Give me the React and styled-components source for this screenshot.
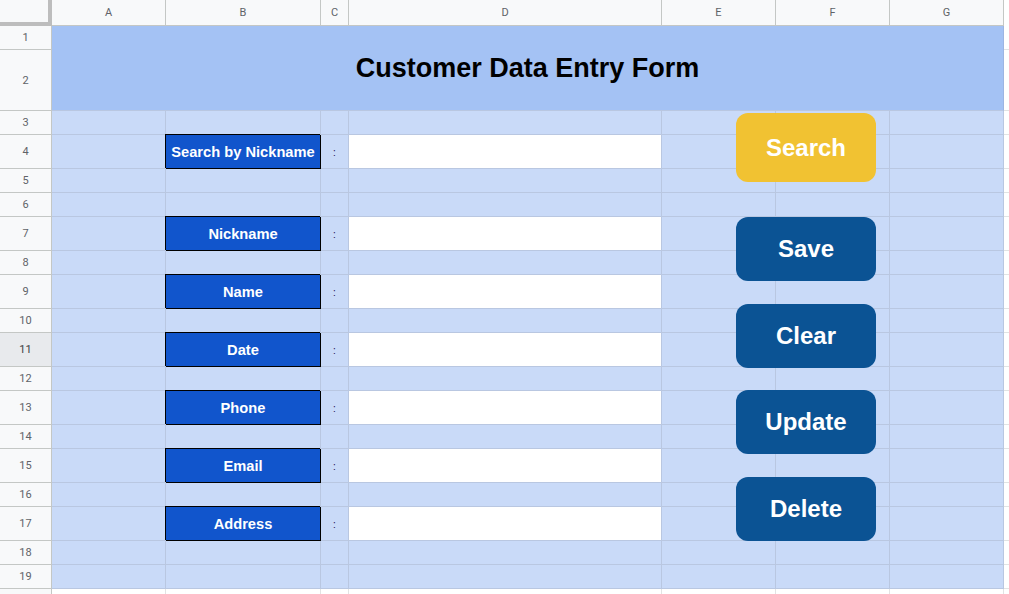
import React from 'react';
import styled, { createGlobalStyle } from 'styled-components';

const Global = createGlobalStyle`
  html, body { margin: 0; padding: 0; background: #ffffff; overflow: hidden; }
  body { font-family: "Liberation Sans", Arial, sans-serif; }
  * { box-sizing: border-box; }
`;

const COLS = ['A', 'B', 'C', 'D', 'E', 'F', 'G'];

const ROWS = [
  { n: 1, h: 24, kind: 'title' },
  { n: 2, h: 61, kind: 'title' },
  { n: 3, h: 24 },
  { n: 4, h: 34, label: 'Search by Nickname' },
  { n: 5, h: 24 },
  { n: 6, h: 24 },
  { n: 7, h: 34, label: 'Nickname' },
  { n: 8, h: 24 },
  { n: 9, h: 34, label: 'Name' },
  { n: 10, h: 24 },
  { n: 11, h: 34, label: 'Date', active: true },
  { n: 12, h: 24 },
  { n: 13, h: 34, label: 'Phone' },
  { n: 14, h: 24 },
  { n: 15, h: 34, label: 'Email' },
  { n: 16, h: 24 },
  { n: 17, h: 34, label: 'Address' },
  { n: 18, h: 24 },
  { n: 19, h: 24 },
  { n: 20, h: 24, kind: 'empty' },
];

const BUTTONS = [
  { text: 'Search', tone: 'yellow' },
  { text: 'Save', tone: 'navy' },
  { text: 'Clear', tone: 'navy' },
  { text: 'Update', tone: 'navy' },
  { text: 'Delete', tone: 'navy' },
];

const GRID = '#b9c7e1';
const HEAD_LINE = '#c4c7c5';

const Sheet = styled.div`
  position: relative;
  display: grid;
  grid-template-columns: 52px 114px 155px 28px 313px 114px 114px 114px 1fr;
  grid-template-rows: ${(p) => p.$rows};
  width: 1009px;
  height: 594px;
  overflow: hidden;
  background: #ffffff;
`;

const Corner = styled.div`
  background: #f8f9fa;
  border-right: 4px solid #bdbdbd;
  border-bottom: 4px solid #bdbdbd;
`;

const ColHeader = styled.div`
  display: flex;
  align-items: center;
  justify-content: center;
  background: ${(p) => (p.$blank ? '#ffffff' : '#f8f9fa')};
  border-right: 1px solid ${(p) => (p.$blank ? 'transparent' : HEAD_LINE)};
  border-bottom: 1px solid ${(p) => (p.$blank ? 'transparent' : HEAD_LINE)};
  font-family: Roboto, "Liberation Sans", sans-serif;
  font-size: 11px;
  color: #5f6368;
`;

const RowHeader = styled.div`
  display: flex;
  align-items: center;
  justify-content: center;
  grid-column: 1;
  background: ${(p) => (p.$active ? '#e8eaed' : '#f8f9fa')};
  border-right: 1px solid ${HEAD_LINE};
  border-bottom: 1px solid ${HEAD_LINE};
  font-family: Roboto, "Liberation Sans", sans-serif;
  font-size: 11px;
  color: ${(p) => (p.$active ? '#3c4043' : '#5f6368')};
`;

const TONES = {
  body: { bg: '#c9daf8', line: GRID },
  input: { bg: '#ffffff', line: GRID },
  empty: { bg: '#ffffff', line: '#e2e3e3' },
};

const Cell = styled.div`
  display: flex;
  align-items: center;
  justify-content: center;
  background: ${(p) => TONES[p.$tone].bg};
  border-right: 1px solid ${(p) => TONES[p.$tone].line};
  border-bottom: 1px solid ${(p) => TONES[p.$tone].line};
`;

const Colon = styled(Cell)`
  font-size: 10px;
  color: #20124d;
  padding-top: 1px;
`;

const Label = styled.div`
  display: flex;
  align-items: center;
  justify-content: center;
  background: #1155cc;
  color: #ffffff;
  font-weight: 700;
  font-size: 14.67px;
  white-space: nowrap;
  border-right: 1px solid #000000;
  border-bottom: 1px solid #000000;
  box-shadow: -1px -1px 0 0 #000000;
`;

const Title = styled.div`
  grid-column: 2 / 9;
  grid-row: 2 / span 2;
  display: flex;
  align-items: center;
  justify-content: center;
  background: #a4c2f4;
  border-right: 1px solid #9db5e2;
  border-bottom: 1px solid ${GRID};
  font-weight: 700;
  font-size: 27px;
  color: #000000;
`;

const SideCell = styled.div`
  background: #ffffff;
  border-bottom: 1px solid #e2e3e3;
  grid-column: 9;
`;

const ButtonStack = styled.div`
  position: absolute;
  top: 113px;
  left: 736px;
  display: flex;
  flex-direction: column;
  gap: 22.5px;
`;

const ActionButton = styled.div`
  width: 140px;
  height: ${(p) => (p.$tone === 'yellow' ? '69px' : '64px')};
  margin-bottom: ${(p) => (p.$tone === 'yellow' ? '12.5px' : '0')};
  border-radius: 12px;
  background: ${(p) => (p.$tone === 'yellow' ? '#f1c232' : '#0b5394')};
  color: #ffffff;
  font-weight: 700;
  font-size: 24px;
  display: flex;
  align-items: center;
  justify-content: center;
`;

function BodyRow({ row }) {
  if (row.kind === 'empty') {
    return (
      <>
        <RowHeader />
        {COLS.map((c) => (
          <Cell key={c} $tone="empty" />
        ))}
        <SideCell />
      </>
    );
  }
  return (
    <>
      <RowHeader $active={row.active}>{row.n}</RowHeader>
      <Cell $tone="body" />
      {row.label ? <Label>{row.label}</Label> : <Cell $tone="body" />}
      {row.label ? <Colon $tone="body">:</Colon> : <Cell $tone="body" />}
      <Cell $tone={row.label ? 'input' : 'body'} />
      <Cell $tone="body" />
      <Cell $tone="body" />
      <Cell $tone="body" />
      <SideCell />
    </>
  );
}

export default function App() {
  const rowTemplate = ['26px', ...ROWS.map((r) => `${r.h}px`)].join(' ');
  return (
    <>
      <Global />
      <Sheet $rows={rowTemplate}>
        <Corner />
        {COLS.map((c) => (
          <ColHeader key={c}>{c}</ColHeader>
        ))}
        <ColHeader $blank />

        <RowHeader>1</RowHeader>
        <Title>Customer Data Entry Form</Title>
        <SideCell />
        <RowHeader>2</RowHeader>
        <SideCell />

        {ROWS.filter((r) => r.kind !== 'title').map((r) => (
          <BodyRow key={r.n} row={r} />
        ))}

        <ButtonStack>
          {BUTTONS.map((b) => (
            <ActionButton key={b.text} $tone={b.tone}>
              {b.text}
            </ActionButton>
          ))}
        </ButtonStack>
      </Sheet>
    </>
  );
}
